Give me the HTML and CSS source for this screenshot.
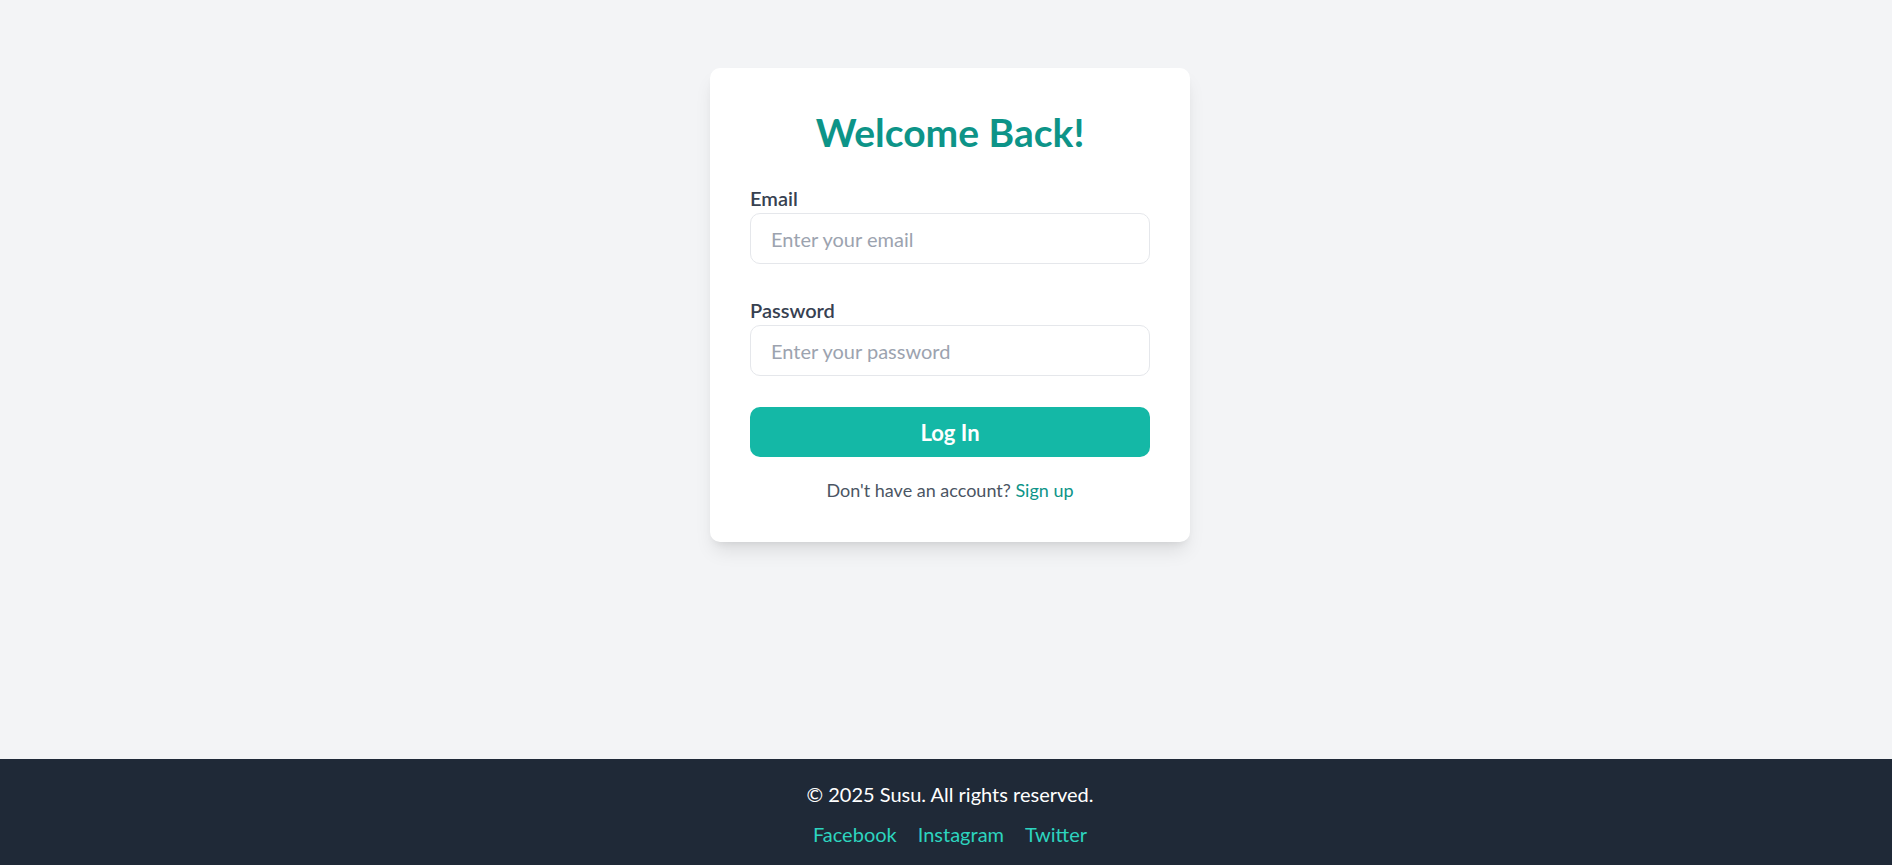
FILE: index.html
```html
<!DOCTYPE html>
<html lang="en">
<head>
  <meta charset="UTF-8">
  <title>Susu - Log In</title>
  <link rel="stylesheet" href="styles.css">
</head>
<body>
  <main class="contenido">
    <div class="tarjeta">
      <h1>Welcome Back!</h1>
      <form id="formLogin">
        <div class="campo">
          <label for="email">Email</label>
          <input type="email" id="email" placeholder="Enter your email">
        </div>

        <div class="campo">
          <label for="password">Password</label>
          <input type="password" id="password" placeholder="Enter your password">
        </div>

        <button type="submit">Log In</button>
      </form>
      <p class="registro">Don't have an account? <a href="#">Sign up</a></p>
    </div>
  </main>

  <footer class="pie">
    <p>&copy; 2025 Susu. All rights reserved.</p>
    <nav class="redes">
      <a href="#">Facebook</a>
      <a href="#">Instagram</a>
      <a href="#">Twitter</a>
    </nav>
  </footer>
</body>
</html>
```

FILE: styles.css
```css
* {
  box-sizing: border-box;
}
body {
  margin: 0;
  font-family: Lato, "Noto Sans", sans-serif;
  background: #f3f4f6;
  color: #374151;
  min-height: 100vh;
  display: flex;
  flex-direction: column;
}
.contenido {
  flex: 1;
  display: flex;
  justify-content: center;
  align-items: flex-start;
  padding: 68px 0 0 8px;
}
.tarjeta {
  width: 480px;
  background: white;
  border-radius: 10px;
  padding: 40px;
  box-shadow: 0 12px 19px -4px rgba(0,0,0,0.1), 0 5px 8px -5px rgba(0,0,0,0.1);
}
h1 {
  margin: 0 0 27px;
  text-align: center;
  font-size: 39px;
  line-height: 48px;
  font-weight: 700;
  color: #0d9488;
}
.campo {
  margin-bottom: 31px;
}
label {
  display: block;
  font-size: 20px;
  line-height: 30px;
  font-weight: 600;
  color: #374151;
}
input {
  display: block;
  width: 100%;
  height: 51px;
  padding: 0 20px;
  font-family: inherit;
  font-size: 20px;
  color: #374151;
  border: 1px solid #e5e7eb;
  border-radius: 10px;
  outline: none;
}
input::placeholder {
  color: #9ca3af;
}
button {
  display: block;
  width: 100%;
  height: 50px;
  border: none;
  border-radius: 10px;
  background-color: #14b8a6;
  color: white;
  font-family: inherit;
  font-size: 22px;
  font-weight: 700;
  cursor: pointer;
}
.registro {
  margin: 21px 0 0;
  text-align: center;
  font-size: 18px;
  line-height: 24px;
  color: #4b5563;
}
.registro a {
  color: #0d9488;
  text-decoration: none;
}
.pie {
  background: #1f2937;
  color: white;
  text-align: center;
  padding: 23px 0 18px 8px;
  font-size: 20px;
  line-height: 25px;
}
.pie p {
  margin: 0 0 15px;
}
.redes {
  display: flex;
  justify-content: center;
  gap: 21px;
}
.redes a {
  color: #2dd4bf;
  text-decoration: none;
}
```
